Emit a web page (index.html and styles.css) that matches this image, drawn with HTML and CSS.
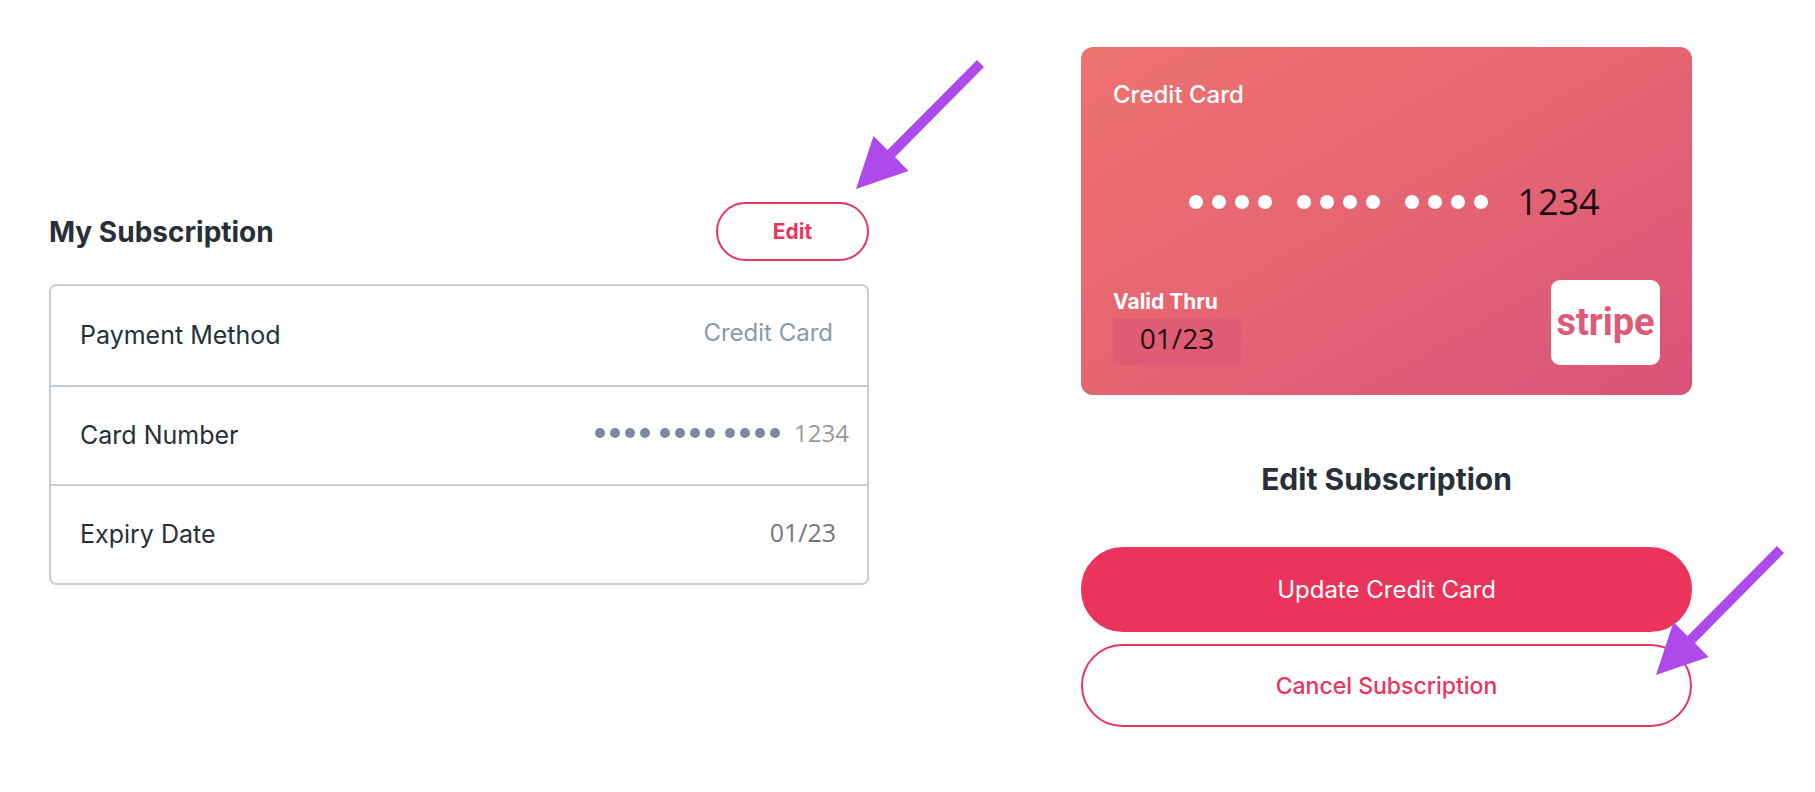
FILE: index.html
```html
<!DOCTYPE html>
<html lang="en">
<head>
    <meta charset="UTF-8">
    <meta name="viewport" content="width=device-width, initial-scale=1.0">
    <title>My Subscription</title>
    <link rel="stylesheet" href="styles.css">
</head>
<body>
    <main class="page">
        <section class="subscription">
            <div class="subscription-header">
                <h1>My Subscription</h1>
                <button type="button" class="btn btn-edit">Edit</button>
                <svg class="arrow arrow-edit" viewBox="0 0 128 129" aria-hidden="true">
                    <path d="M0 129 L17.5 76 L31.5 90 L121 0 L128 7 L39 97 L52.5 111 Z"/>
                </svg>
            </div>

            <table class="details">
                <tr>
                    <th scope="row">Payment Method</th>
                    <td>Credit Card</td>
                </tr>
                <tr>
                    <th scope="row">Card Number</th>
                    <td class="number">
                        <div class="masked">
                            <span class="dots"><i></i><i></i><i></i><i></i></span>
                            <span class="dots"><i></i><i></i><i></i><i></i></span>
                            <span class="dots"><i></i><i></i><i></i><i></i></span>
                            <span class="digits">1234</span>
                        </div>
                    </td>
                </tr>
                <tr>
                    <th scope="row">Expiry Date</th>
                    <td class="expiry">01/23</td>
                </tr>
            </table>
        </section>

        <section class="edit">
            <div class="card">
                <div class="card-type">Credit Card</div>
                <div class="masked card-number">
                    <span class="dots"><i></i><i></i><i></i><i></i></span>
                    <span class="dots"><i></i><i></i><i></i><i></i></span>
                    <span class="dots"><i></i><i></i><i></i><i></i></span>
                    <span class="digits">1234</span>
                </div>
                <div class="card-footer">
                    <div>
                        <div class="valid-label">Valid Thru</div>
                        <div class="valid-date">01/23</div>
                    </div>
                    <div class="brand">stripe</div>
                </div>
            </div>

            <h2>Edit Subscription</h2>

            <div class="actions">
                <button type="button" class="btn btn-update">Update Credit Card</button>
                <button type="button" class="btn btn-cancel">Cancel Subscription</button>
                <svg class="arrow arrow-cancel" viewBox="0 0 128 129" aria-hidden="true">
                    <path d="M0 129 L17.5 76 L31.5 90 L121 0 L128 7 L39 97 L52.5 111 Z"/>
                </svg>
            </div>
        </section>
    </main>
</body>
</html>
```
FILE: styles.css
```css
* {
    box-sizing: border-box;
}
body {
    margin: 0;
    background: #fff;
    color: #282f39;
    font-family: Inter, "Open Sans", sans-serif;
    font-size: 25px;
}
h1, h2 {
    margin: 0;
    font-size: 28px;
    line-height: 36px;
    font-weight: 700;
}
.page {
    display: grid;
    grid-template-columns: 820fr 611fr;
    column-gap: 212px;
    align-items: start;
    padding: 47px 123px 64px 49px;
}

/* Left panel */
.subscription {
    padding-top: 155px;
}
.subscription-header {
    position: relative;
    display: flex;
    justify-content: space-between;
    align-items: center;
    margin-bottom: 23px;
}
.details {
    width: 100%;
    border: 2px solid #c7cddb;
    border-radius: 7px;
    border-spacing: 0;
}
.details th, .details td {
    height: 99px;
    padding: 0 34px 2px 29px;
}
.details th {
    text-align: left;
    font-weight: 400;
}
.details td {
    padding-bottom: 6px;
    text-align: right;
    font-size: 24px;
    color: #8e97a9;
}
.details tr + tr th, .details tr + tr td {
    border-top: 2px solid #c7cddb;
}
.details .number {
    padding-right: 18px;
}
.details .expiry {
    padding-right: 31px;
    font-family: "Open Sans", sans-serif;
    font-size: 25px;
    color: #777;
}

/* Masked card number */
.masked {
    display: flex;
    align-items: center;
    justify-content: flex-end;
    gap: 10px;
}
.dots {
    display: flex;
    gap: 5px;
}
.dots i {
    width: 10px;
    height: 10px;
    border-radius: 50%;
    background: #7f889c;
}
.digits {
    padding-left: 4px;
    font-family: "Open Sans", sans-serif;
    font-size: 24px;
    color: #999;
}

/* Credit card */
.card {
    display: flex;
    flex-direction: column;
    height: 348px;
    padding: 32px 32px 30px;
    border-radius: 12px;
    background: linear-gradient(to bottom right, #ed736f, #e56573 50%, #d9527a);
    color: #fff;
}
.card-type {
    font-size: 24px;
    line-height: 32px;
    font-weight: 500;
}
.card-number {
    justify-content: center;
    gap: 25px;
    margin-top: 63px;
    padding-left: 16px;
}
.card-number .dots {
    gap: 9px;
}
.card-number .dots i {
    width: 14px;
    height: 14px;
    background: #fff;
}
.card-number .digits {
    font-size: 36px;
    line-height: 56px;
    color: #1c0a10;
}
.card-footer {
    display: flex;
    justify-content: space-between;
    align-items: flex-end;
    margin-top: auto;
}
.valid-label {
    font-size: 21px;
    line-height: 34px;
    font-weight: 700;
}
.valid-date {
    width: 128px;
    padding-bottom: 8px;
    background: #e05c75;
    font-family: "Open Sans", sans-serif;
    font-size: 28px;
    line-height: 38px;
    text-align: center;
    color: #1c0a10;
}
.brand {
    width: 109px;
    border-radius: 9px;
    background: #fff;
    color: #de5a78;
    font-family: Roboto, sans-serif;
    font-size: 38px;
    line-height: 85px;
    font-weight: 700;
    text-align: center;
}

.edit h2 {
    margin: 66px 0 50px;
    font-size: 30px;
    text-align: center;
}

/* Buttons */
.btn {
    border: 2px solid #eb345b;
    border-radius: 42px;
    background: #fff;
    color: #eb345b;
    font-family: inherit;
    font-size: 23px;
    cursor: pointer;
}
.btn-edit {
    width: 153px;
    height: 59px;
    font-size: 21px;
    font-weight: 700;
}
.actions {
    position: relative;
    display: flex;
    flex-direction: column;
    gap: 12px;
}
.btn-update {
    height: 85px;
    background: #eb345b;
    color: #fff;
    font-size: 24px;
}
.btn-cancel {
    height: 83px;
    font-weight: 500;
}

/* Arrows pointing at the buttons */
.arrow {
    position: absolute;
    width: 128px;
    height: 129px;
    fill: #ae4aec;
    pointer-events: none;
}
.arrow-edit {
    right: -115px;
    bottom: 72px;
}
.arrow-cancel {
    right: -92px;
    bottom: 52px;
}
```
